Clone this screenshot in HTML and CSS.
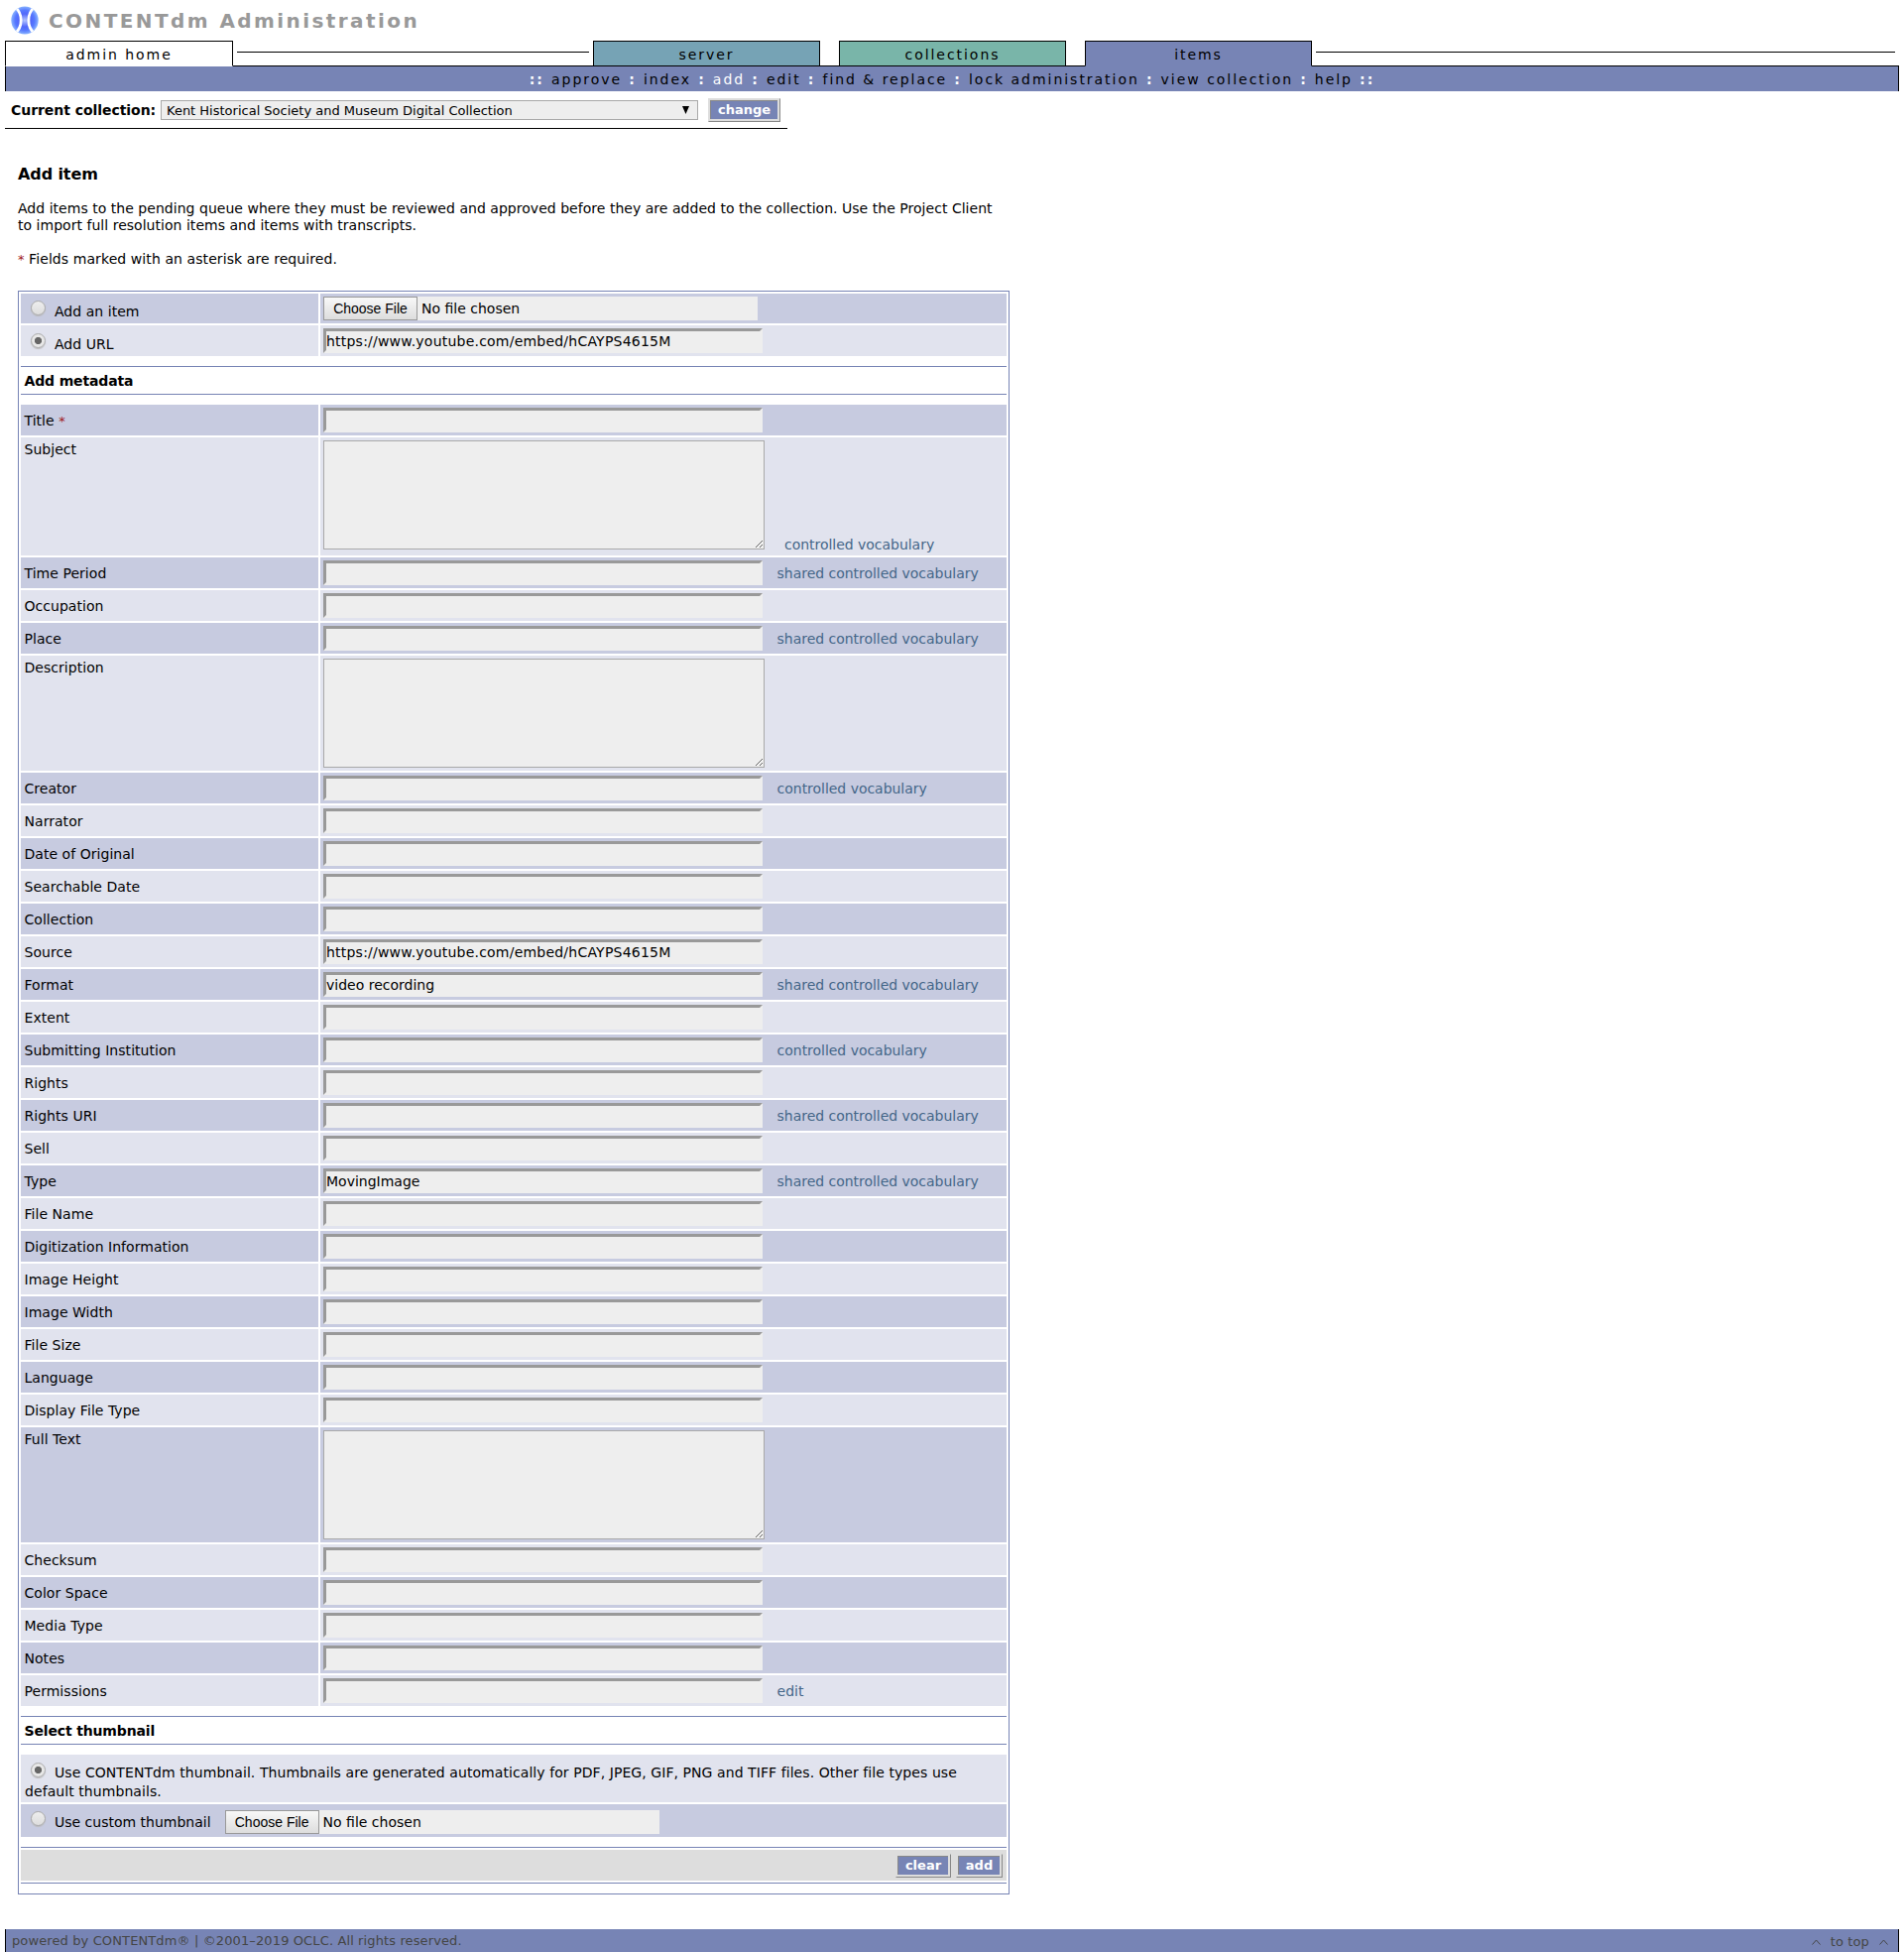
FILE: index.html
```html
<!DOCTYPE html>
<html lang="en">
<head>
<meta charset="utf-8">
<title>CONTENTdm Administration</title>
<link rel="stylesheet" href="styles.css">
</head>
<body>
<header class="brand">
<svg class="logo" width="28" height="29" viewBox="0 0 28 29"><defs><radialGradient id="g"><stop offset="0" stop-color="#b4c6ff"/><stop offset=".45" stop-color="#5268fa"/><stop offset=".7" stop-color="#5679ff"/><stop offset="1" stop-color="#8db8ff"/></radialGradient><clipPath id="c"><ellipse cx="14" cy="14.5" rx="13.7" ry="14"/></clipPath></defs><g clip-path="url(#c)"><rect width="28" height="29" fill="url(#g)"/><path d="M4 1C12.3 8 12.3 21 4 28M24 1C15.7 8 15.7 21 24 28" fill="none" stroke="#fff" stroke-width="2.8"/></g></svg>
<span class="brand-name">CONTENTdm Administration</span>
</header>
<nav class="tabs">
<a class="tab home">admin home</a><i class="rule rule-left"></i>
<a class="tab server">server</a><a class="tab collections">collections</a><a class="tab items">items</a><i class="rule rule-right"></i>
</nav>
<nav class="subnav"><span class="subnav-text"><b>::</b> approve <b>:</b> index <b>:</b> <span class="active">add</span> <b>:</b> edit <b>:</b> find &amp; replace <b>:</b> lock administration <b>:</b> view collection <b>:</b> help <b>::</b></span></nav>
<div class="current"><span class="current-label">Current collection:</span><div class="select"><span>Kent Historical Society and Museum Digital Collection</span><svg width="7" height="8" viewBox="0 0 7 8"><path d="M0 0h7L3.5 8z"/></svg></div><button class="btn change">change</button></div>
<main>
<h1>Add item</h1>
<p class="intro">Add items to the pending queue where they must be reviewed and approved before they are added to the collection. Use the Project Client<br>to import full resolution items and items with transcripts.</p>
<p class="note"><em>*</em> Fields marked with an asterisk are required.</p>
<form class="panel">
<div class="row dark first"><label class="pick"><input type="radio" name="src"><span>Add an item</span></label><div class="file"><button type="button">Choose File</button><span>No file chosen</span></div></div>
<div class="row"><label class="pick"><input type="radio" name="src" checked><span>Add URL</span></label><div><input class="text url" value="https://www.youtube.com/embed/hCAYPS4615M"></div></div>
<h2>Add metadata</h2>
<div class="row dark"><label>Title <em>*</em></label><div><input class="text"></div></div>
<div class="row tall subject"><label>Subject</label><div><textarea></textarea><a>controlled vocabulary</a></div></div>
<div class="row dark"><label>Time Period</label><div><input class="text"><a>shared controlled vocabulary</a></div></div>
<div class="row"><label>Occupation</label><div><input class="text"></div></div>
<div class="row dark"><label>Place</label><div><input class="text"><a>shared controlled vocabulary</a></div></div>
<div class="row tall"><label>Description</label><div><textarea></textarea></div></div>
<div class="row dark"><label>Creator</label><div><input class="text"><a>controlled vocabulary</a></div></div>
<div class="row"><label>Narrator</label><div><input class="text"></div></div>
<div class="row dark"><label>Date of Original</label><div><input class="text"></div></div>
<div class="row"><label>Searchable Date</label><div><input class="text"></div></div>
<div class="row dark"><label>Collection</label><div><input class="text"></div></div>
<div class="row"><label>Source</label><div><input class="text url" value="https://www.youtube.com/embed/hCAYPS4615M"></div></div>
<div class="row dark"><label>Format</label><div><input class="text" value="video recording"><a>shared controlled vocabulary</a></div></div>
<div class="row"><label>Extent</label><div><input class="text"></div></div>
<div class="row dark"><label>Submitting Institution</label><div><input class="text"><a>controlled vocabulary</a></div></div>
<div class="row"><label>Rights</label><div><input class="text"></div></div>
<div class="row dark"><label>Rights URI</label><div><input class="text"><a>shared controlled vocabulary</a></div></div>
<div class="row"><label>Sell</label><div><input class="text"></div></div>
<div class="row dark"><label>Type</label><div><input class="text" value="MovingImage"><a>shared controlled vocabulary</a></div></div>
<div class="row"><label>File Name</label><div><input class="text"></div></div>
<div class="row dark"><label>Digitization Information</label><div><input class="text"></div></div>
<div class="row"><label>Image Height</label><div><input class="text"></div></div>
<div class="row dark"><label>Image Width</label><div><input class="text"></div></div>
<div class="row"><label>File Size</label><div><input class="text"></div></div>
<div class="row dark"><label>Language</label><div><input class="text"></div></div>
<div class="row"><label>Display File Type</label><div><input class="text"></div></div>
<div class="row dark tall"><label>Full Text</label><div><textarea></textarea></div></div>
<div class="row"><label>Checksum</label><div><input class="text"></div></div>
<div class="row dark"><label>Color Space</label><div><input class="text"></div></div>
<div class="row"><label>Media Type</label><div><input class="text"></div></div>
<div class="row dark"><label>Notes</label><div><input class="text"></div></div>
<div class="row"><label>Permissions</label><div><input class="text"><a>edit</a></div></div>
<h2>Select thumbnail</h2>
<div class="thumb auto"><input type="radio" name="thumb" checked><span>Use CONTENTdm thumbnail. Thumbnails are generated automatically for PDF, JPEG, GIF, PNG and TIFF files. Other file types use</span><br>default thumbnails.</div>
<div class="thumb custom"><input type="radio" name="thumb"><span>Use custom thumbnail</span><div class="file"><button type="button">Choose File</button><span>No file chosen</span></div></div>
<div class="actions"><div><button type="button" class="btn clear">clear</button><button type="button" class="btn add">add</button></div></div>
</form>
</main>
<footer><span>powered by CONTENTdm® | ©2001–2019 OCLC. All rights reserved.</span><a><svg width="9" height="6" viewBox="0 0 9 6"><path d="M.5 5.5l4-4.5 4 4.5"/></svg><span>to top</span><svg width="9" height="6" viewBox="0 0 9 6"><path d="M.5 5.5l4-4.5 4 4.5"/></svg></a></footer>
</body>
</html>
```

FILE: styles.css
```css
* { box-sizing: border-box; }
body { margin: 0; height: 1968px; overflow: hidden; background: #fff; color: #000; font: 14px/17px "DejaVu Sans", Verdana, sans-serif; white-space: nowrap; }
button, input, textarea { font: inherit; margin: 0; }
em { color: #a02020; font-style: normal; font-size: 13px; line-height: 1; }

.brand { height: 41px; display: flex; padding: 6px 0 0 11px; }
.brand-name { margin-left: 10px; font-size: 20px; line-height: 30px; font-weight: bold; letter-spacing: 2.42px; color: #999; }

.tabs { display: flex; height: 26px; margin: 0 5px; background: linear-gradient(#000, #000) bottom / 100% 1px no-repeat; }
.tab { width: 229px; height: 26px; border: 1px solid #000; text-align: center; line-height: 26px; letter-spacing: 1.95px; }
.home { width: 230px; background: #fff; border-bottom-color: #fff; }
.server { background: #76a3b5; margin-left: 4px; }
.collections { background: #79b5a9; margin-left: 19px; }
.items { background: #7784b5; margin-left: 19px; border-bottom-color: #7784b5; }
.rule { height: 1px; background: #000; margin-top: 11px; }
.rule-left { width: 355px; margin-left: 4px; }
.rule-right { flex: 1; margin: 11px 4px 0; }

.subnav { margin: 0 5px; height: 25px; background: #7784b5; border: solid #000; border-width: 0 1px; text-align: center; line-height: 26px; letter-spacing: 1.97px; }
.subnav b { padding: 0 .7px; color: #fff; }
.active { color: #fff; }

.current { display: flex; width: 789px; height: 38px; margin-left: 5px; padding: 7px 0 0 6px; border-bottom: 1px solid #000; }
.current-label { width: 151px; line-height: 24px; font-weight: bold; letter-spacing: -.05px; }
.select { display: flex; justify-content: space-between; align-items: center; width: 542px; height: 20px; margin-top: 2px; padding: 0 8px 0 5px; border: 1px solid #a9a9a9; background: #eee; font-size: 13px; }
.btn { height: 24px; padding: 0; border: 1px solid; border-color: #ddd #888 #888 #ddd; background: #7784b5; box-shadow: inset 0 0 0 1px #ddd, inset -1px -1px 0 1px #ddd, inset 1px 1px 0 1px #888; color: #fff; font-size: 13px; font-weight: bold; line-height: 20px; }
.change { width: 73px; margin-left: 10px; }

main { padding: 37px 0 0 18px; }
h1 { margin: 0; font-size: 16px; line-height: 17px; letter-spacing: -.1px; }
.intro { margin: 18px 0 0; letter-spacing: .03px; }
.note { margin: 17px 0 0; letter-spacing: .08px; }
.panel { width: 1000px; height: 1617px; margin: 23px 0 0; padding: 2px; border: 1px solid #7784b5; }
.row { display: grid; grid-template: 100% / 300px 692px; column-gap: 2px; height: 31px; margin-bottom: 2px; }
.row > * { height: 100%; padding: 0 3.5px; background: #e1e3ee; line-height: 32px; }
.row.dark > * { background: #c7cbe0; }
.row label { letter-spacing: .04px; }
.row > div { display: flex; padding: 3px; }
.row.first { height: 30px; }
.row.tall { height: 116px; }
.row.subject { height: 119px; }
.row.tall label { line-height: 24px; }
.row a { margin-left: 14.6px; color: #446688; line-height: 26px; letter-spacing: -.03px; }
.subject a { margin: 90px 0 0 20px; line-height: 30px; }
.text { width: 443px; height: 25px; padding: 0; border: 3px solid #eee; border-top-color: #999; border-left-color: #999; background: #eee; line-height: 19px; outline: 0; }
.url { letter-spacing: .22px; }
textarea { width: 445px; height: 110px; border: 1px solid #a9a9a9; background: #eee; resize: both; }
.pick { display: flex; }
.row > .pick { padding: 0 4px; line-height: 38px; }
.row.first > .pick { line-height: 37px; }
input[type=radio] { appearance: none; flex: none; width: 15px; height: 15px; margin: 7px 9px 0 6px; border: 1px solid #aaa; border-radius: 50%; background: linear-gradient(#eee, #ddd); box-shadow: 0 1px 1px #bbb; }
input[type=radio]:checked { background: radial-gradient(circle, #666 3.2px, #e8e8e8 4px); }
.row:not(.first) input[type=radio] { margin-top: 8px; }
.file { display: flex; }
.file button { width: 95px; height: 24px; padding: 0; border: 1px solid #999; background: linear-gradient(#f8f8f8, #ddd); font: 14px "Liberation Sans", Arial, sans-serif; color: #000; }
.file span { width: 343px; height: 24px; padding-left: 4px; background: #eee; line-height: 24px; }

h2 { height: 29px; margin: 10px 0; padding-left: 3.5px; border: solid #7784b5; border-width: 1px 0; font-size: 14px; line-height: 28px; letter-spacing: -.15px; }
.thumb { padding-left: 4px; background: #e1e3ee; }
.auto { height: 48px; margin-bottom: 2px; line-height: 19px; padding-top: 8px; letter-spacing: .07px; }
.auto input[type=radio] { margin: 0 9px 0 6px; vertical-align: 0; }
.custom { display: flex; height: 33px; background: #c7cbe0; line-height: 36px; }
.custom .file { margin: 6px 0 0 14px; }
.actions { margin-top: 10px; height: 37px; padding: 2px 0; border: solid #7784b5; border-width: 1px 0; }
.actions div { display: flex; justify-content: flex-end; gap: 5px; height: 31px; padding: 4px 4px 0 0; background: #ddd; }
.clear { width: 56px; }
.add { width: 47px; }

footer { display: flex; justify-content: space-between; height: 23px; margin: 35px 5px 0; padding: 0 10px 0 6px; border: solid #000; border-width: 0 1px; background: #7784b5; color: #444; font-size: 13px; line-height: 24px; letter-spacing: .12px; }
footer a { display: flex; align-items: center; gap: 10px; padding-top: 2px; }
footer svg { fill: none; stroke: #444; }
```
